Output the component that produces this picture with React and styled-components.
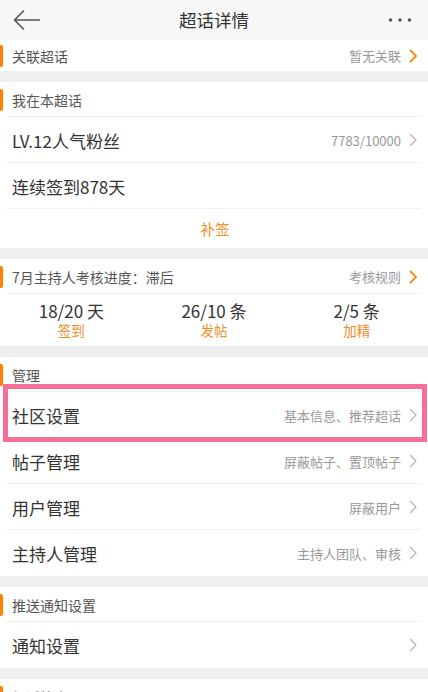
import React from 'react';
import styled, { createGlobalStyle } from 'styled-components';

const GlobalStyle = createGlobalStyle`
  html, body {
    margin: 0;
    padding: 0;
    background: #efefef;
    font-family: "Noto Sans CJK SC", "Noto Sans", Roboto, sans-serif;
    -webkit-font-smoothing: antialiased;
  }
  * { box-sizing: border-box; }
`;

const Page = styled.div`
  width: 428px;
  height: 692px;
  overflow: hidden;
  background: #efefef;
`;

const NavBar = styled.div`
  height: 40px;
  background: #f7f7f7;
  display: grid;
  grid-template-columns: 60px 1fr 60px;
  align-items: center;
`;

const NavTitle = styled.div`
  text-align: center;
  font-size: 17.5px;
  color: #333;
  line-height: 1;
`;

const NavIcon = styled.div`
  display: flex;
  align-items: center;
  justify-content: ${p => (p.right ? 'flex-end' : 'flex-start')};
  padding: ${p => (p.right ? '0 16px 0 0' : '0 0 0 13px')};
`;

const Card = styled.div`
  background: #fff;
  margin-bottom: 11px;
`;

const Header = styled.div`
  position: relative;
  height: ${p => p.h || 35}px;
  display: flex;
  align-items: center;
  justify-content: space-between;
  padding: 0 10px 0 12px;
  font-size: 14px;
  color: #555;
  &::before {
    content: '';
    position: absolute;
    left: 0;
    top: 50%;
    width: 3px;
    height: 22px;
    margin-top: -11px;
    background: #ff8200;
    border-radius: 0 2px 2px 0;
  }
  ${p => p.divided && `
    &::after {
      content: '';
      position: absolute;
      left: 7px;
      right: 7px;
      bottom: 0;
      height: 1px;
      background: #f0f0f0;
    }
  `}
`;

const Side = styled.div`
  display: flex;
  align-items: center;
  gap: 8px;
  font-size: 13px;
  color: #999;
`;

const Row = styled.div`
  position: relative;
  height: ${p => p.h || 46}px;
  display: flex;
  align-items: center;
  justify-content: ${p => (p.center ? 'center' : 'space-between')};
  padding: 0 10px 0 12px;
  font-size: 17px;
  color: #333;
  ${p => !p.last && `
    &::after {
      content: '';
      position: absolute;
      left: 7px;
      right: 7px;
      bottom: 0;
      height: 1px;
      background: #f0f0f0;
    }
  `}
`;

const Action = styled.span`
  color: #f28d1f;
  font-size: 14.5px;
`;

const Highlight = styled.div`
  position: absolute;
  left: 3px;
  right: 1px;
  top: -8px;
  bottom: -4px;
  border: 5px solid #f56f97;
  pointer-events: none;
  z-index: 2;
`;

const Stats = styled.div`
  height: 52px;
  display: grid;
  grid-template-columns: repeat(3, 1fr);
  align-items: center;
`;

const Stat = styled.div`
  display: flex;
  flex-direction: column;
  align-items: center;
`;

const StatValue = styled.div`
  font-size: 17px;
  line-height: 20px;
  height: 20px;
  color: #333;
`;

const StatLabel = styled.div`
  font-size: 13.5px;
  line-height: 18px;
  height: 18px;
  color: #f28d1f;
`;

const Chevron = ({ orange }) => (
  <svg width="9" height="14" viewBox="0 0 9 14" fill="none">
    <path
      d="M1.5 1.5 L7 7 L1.5 12.5"
      stroke={orange ? '#f7931e' : '#b5b5b5'}
      strokeWidth={orange ? 2 : 1.2}
      strokeLinecap="round"
      strokeLinejoin="round"
    />
  </svg>
);

const BackArrow = () => (
  <svg width="28" height="20" viewBox="0 0 28 20" fill="none">
    <path d="M1.5 10 H26.5 M10.5 1 L1.5 10 L10.5 19" stroke="#555" strokeWidth="1.6" strokeLinecap="round" strokeLinejoin="round" />
  </svg>
);

const Dots = () => (
  <svg width="24" height="6" viewBox="0 0 24 6">
    <circle cx="2.5" cy="3" r="1.8" fill="#555" />
    <circle cx="12" cy="3" r="1.8" fill="#555" />
    <circle cx="21.5" cy="3" r="1.8" fill="#555" />
  </svg>
);

const manage = [
  { title: '社区设置', desc: '基本信息、推荐超话', marked: true },
  { title: '帖子管理', desc: '屏蔽帖子、置顶帖子' },
  { title: '用户管理', desc: '屏蔽用户' },
  { title: '主持人管理', desc: '主持人团队、审核' },
];

const stats = [
  { value: '18/20 天', label: '签到' },
  { value: '26/10 条', label: '发帖' },
  { value: '2/5 条', label: '加精' },
];

const App = () => {
  return (
    <Page>
      <GlobalStyle />
      <NavBar>
        <NavIcon><BackArrow /></NavIcon>
        <NavTitle>超话详情</NavTitle>
        <NavIcon right><Dots /></NavIcon>
      </NavBar>

      <Card>
        <Header h={31}>
          关联超话
          <Side>暂无关联 <Chevron orange /></Side>
        </Header>
      </Card>

      <Card>
        <Header divided>我在本超话</Header>
        <Row>
          LV.12人气粉丝
          <Side>7783/10000 <Chevron /></Side>
        </Row>
        <Row>连续签到878天</Row>
        <Row h={39} center last><Action>补签</Action></Row>
      </Card>

      <Card>
        <Header divided>
          7月主持人考核进度：滞后
          <Side>考核规则 <Chevron orange /></Side>
        </Header>
        <Stats>
          {stats.map(s => (
            <Stat key={s.label}>
              <StatValue>{s.value}</StatValue>
              <StatLabel>{s.label}</StatLabel>
            </Stat>
          ))}
        </Stats>
      </Card>

      <Card>
        <Header divided>管理</Header>
        {manage.map((m, i) => (
          <Row key={m.title} last={i === manage.length - 1}>
            {m.marked && <Highlight />}
            {m.title}
            <Side>{m.desc} <Chevron /></Side>
          </Row>
        ))}
      </Card>

      <Card>
        <Header divided>推送通知设置</Header>
        <Row last>
          通知设置
          <Side><Chevron /></Side>
        </Row>
      </Card>

      <Card>
        <Header>超话简介</Header>
      </Card>
    </Page>
  );
};

export default App;
